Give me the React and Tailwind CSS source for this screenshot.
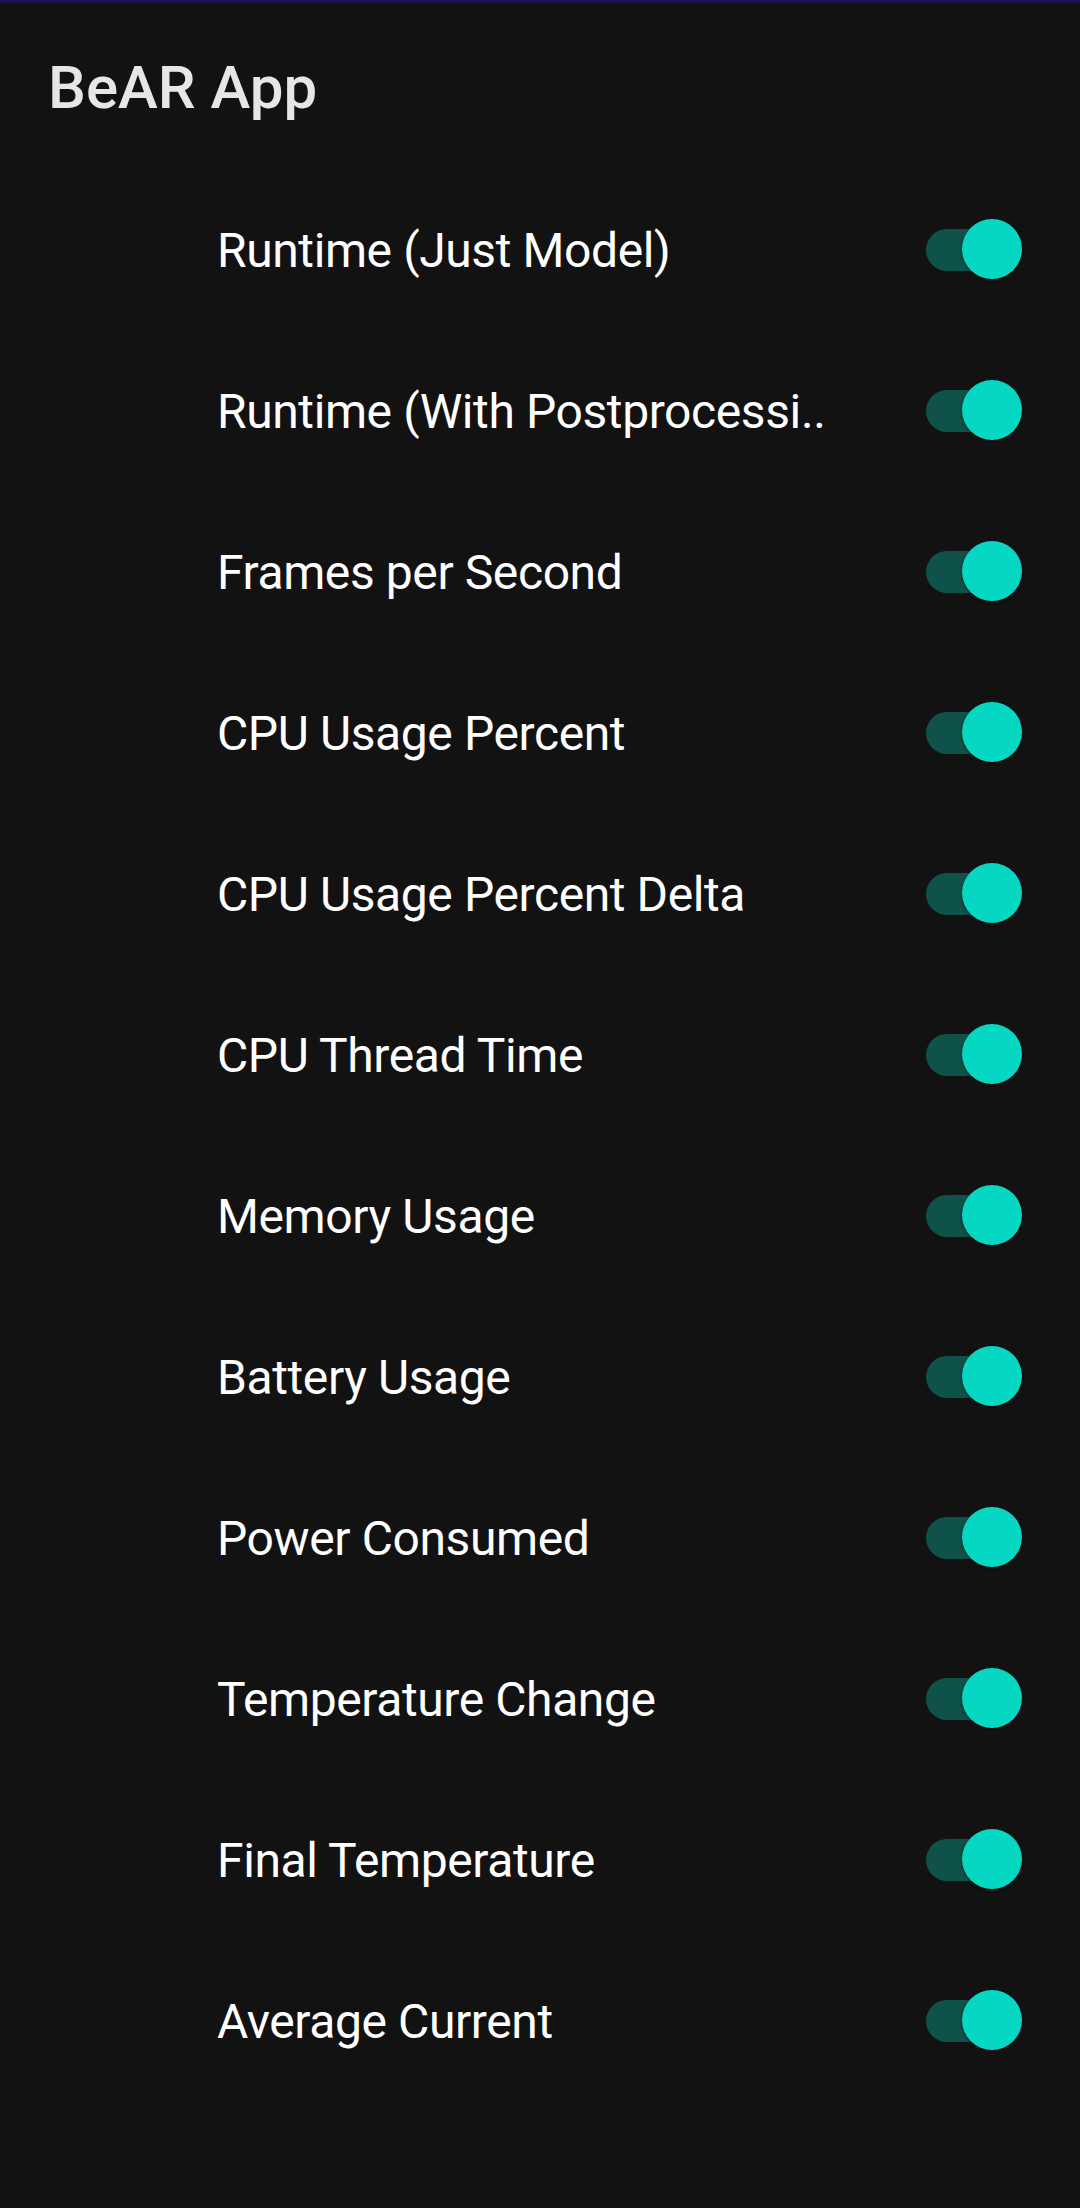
import React from 'react';

const metrics = [
  'Runtime (Just Model)',
  'Runtime (With Postprocessi..',
  'Frames per Second',
  'CPU Usage Percent',
  'CPU Usage Percent Delta',
  'CPU Thread Time',
  'Memory Usage',
  'Battery Usage',
  'Power Consumed',
  'Temperature Change',
  'Final Temperature',
  'Average Current',
];

const Toggle = () => (
  <div className="relative w-[96px] h-[60px] shrink-0">
    <div className="absolute left-0 top-[10px] w-[84px] h-[42px] rounded-full bg-[#0f5249]" />
    <div className="absolute right-0 top-0 w-[60px] h-[60px] rounded-full bg-[#05d7c3] shadow-[0_1px_3px_rgba(0,0,0,0.6)]" />
  </div>
);

const App = () => {
  return (
    <div
      className="min-h-screen w-[1080px] h-[2208px] bg-[#121212] overflow-hidden"
      style={{ fontFamily: 'Roboto, "Noto Sans", sans-serif' }}
    >
      <div className="h-[3px] bg-[#1e0f50]" />
      <div className="h-[165px] pt-[55px] pl-[48px]">
        <h1 className="text-[60px] leading-[60px] font-medium text-[#e6e6e6]">BeAR App</h1>
      </div>

      <div className="flex flex-col">
        {metrics.map((label) => (
          <div key={label} className="h-[161px] flex items-center pl-[217px] pr-[58px]">
            <span className="flex-1 pt-[5px] text-[48px] leading-[56px] tracking-[-0.4px] text-white whitespace-nowrap overflow-hidden">
              {label}
            </span>
            <Toggle />
          </div>
        ))}
      </div>
    </div>
  );
};

export default App;
